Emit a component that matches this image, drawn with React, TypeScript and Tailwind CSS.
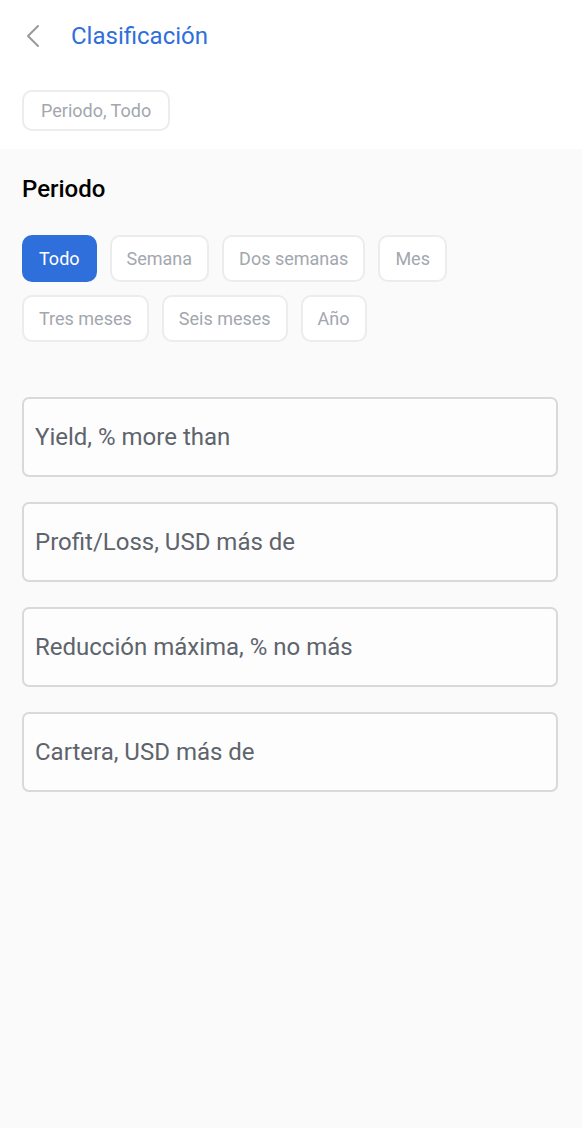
import React from "react";

const row1 = ["Todo", "Semana", "Dos semanas", "Mes"];
const row2 = ["Tres meses", "Seis meses", "Año"];
const fields = [
  "Yield, % more than",
  "Profit/Loss, USD más de",
  "Reducción máxima, % no más",
  "Cartera, USD más de",
];

function Chip({ label, active }: { label: string; active?: boolean }) {
  return (
    <button
      className={
        active
          ? "h-[47px] px-[15px] rounded-[10px] bg-[#2f6fdc] text-white text-[18px] border-2 border-[#2f6fdc]"
          : "h-[47px] px-[15px] rounded-[10px] bg-white text-[#a3a7ae] text-[18px] border-2 border-[#ececec]"
      }
    >
      {label}
    </button>
  );
}

export default function App() {
  return (
    <div
      className="w-[582px] min-h-[1128px] bg-[#fafafa]"
      style={{ fontFamily: "Roboto, 'Noto Sans', sans-serif" }}
    >
      <div className="bg-white pb-[18px]">
        <div className="flex items-center h-[72px] pl-[25px]">
          <svg width="16" height="24" viewBox="0 0 16 24" fill="none">
            <path d="M13 2 L3 12 L13 22" stroke="#9a9a9a" strokeWidth="2" strokeLinecap="round" strokeLinejoin="round" />
          </svg>
          <span className="ml-[30px] text-[24px] text-[#2f6fdc]">Clasificación</span>
        </div>
        <div className="px-[22px] mt-[18px]">
          <div className="inline-flex items-center h-[41px] px-[17px] rounded-[10px] border-2 border-[#ececec] text-[18px] text-[#a3a7ae] bg-white">
            Periodo, Todo
          </div>
        </div>
      </div>
      <div className="px-[22px] pt-[26px]">
        <h2 className="text-[24px] font-medium text-black leading-[28px]">Periodo</h2>
        <div className="mt-[32px] flex flex-col gap-[13px]">
          <div className="flex gap-[13px]">
            {row1.map((l, i) => (
              <Chip key={l} label={l} active={i === 0} />
            ))}
          </div>
          <div className="flex gap-[13px]">
            {row2.map((l) => (
              <Chip key={l} label={l} />
            ))}
          </div>
        </div>
        <div className="mt-[55px] flex flex-col gap-[25px]">
          {fields.map((f) => (
            <div
              key={f}
              className="h-[80px] w-[536px] rounded-[7px] border-2 border-[#d9d9d9] flex items-center px-[11px] text-[24px] text-[#5e646c] bg-[#fdfdfd]"
            >
              {f}
            </div>
          ))}
        </div>
      </div>
    </div>
  );
}
